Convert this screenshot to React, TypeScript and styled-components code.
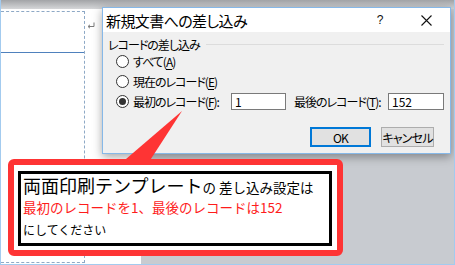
import React from "react";
import styled, { createGlobalStyle } from "styled-components";

const Global = createGlobalStyle`
  html, body { margin: 0; padding: 0; }
  body {
    width: 455px; height: 265px; overflow: hidden;
    font-family: "Noto Sans CJK JP", "Noto Sans", sans-serif;
  }
`;

const Frame = styled.div`
  position: relative;
  width: 455px;
  height: 265px;
  box-sizing: border-box;
  border: 1px solid #a3cbef;
  border-top: none;
  display: flex;
  flex-direction: column;
  background: #c8cbd0;
  overflow: hidden;
`;

const TopStrip = styled.div`
  height: 9px;
  flex: none;
  background: linear-gradient(#a2a4a7, #d5d6d8);
`;

const Workspace = styled.div`
  flex: 1;
  display: flex;
`;

const Page = styled.div`
  width: 140px;
  background: #fff;
  padding-top: 2px;
  box-sizing: border-box;
  display: flex;
  align-items: flex-start;
`;

const MarginBox = styled.div`
  width: 84px;
  height: 252px;
  box-sizing: border-box;
  border: 1px dashed #8ea9c6;
  border-left: none;
`;

const RuleLine = styled.div`
  margin-top: 40px;
  height: 1px;
  background: #4f81bd;
`;

const ReturnMark = styled.svg`
  margin: 11px 0 0 2px;
  flex: none;
`;

const Dialog = styled.div`
  position: absolute;
  left: 101px;
  top: 7px;
  width: 349px;
  height: 147px;
  box-sizing: border-box;
  border: 1px solid #86b8e8;
  background: #f0f0f0;
  box-shadow: 0 3px 9px rgba(0, 0, 0, 0.35);
  display: flex;
  flex-direction: column;
  font-feature-settings: "palt";
`;

const TitleBar = styled.div`
  height: 24px;
  background: #fff;
  display: flex;
  align-items: center;
  padding-left: 3px;
`;

const Title = styled.div`
  font-size: 15px;
  letter-spacing: -0.6px;
  color: #000;
  line-height: 1;
`;

const Help = styled.div`
  margin-left: auto;
  width: 10px;
  font-family: "Liberation Sans", sans-serif;
  font-size: 12px;
  color: #111;
  text-align: center;
`;

const CloseBtn = styled.svg`
  margin: 0 18px 0 36px;
`;

const Body = styled.div`
  flex: 1;
  display: flex;
  flex-direction: column;
  padding-top: 4px;
`;

const GroupHeader = styled.div`
  display: flex;
  align-items: center;
  height: 16px;
  padding: 0 5px;
  font-size: 12px;
  letter-spacing: -1px;
  color: #000;
`;

const GroupLine = styled.div`
  flex: 1;
  height: 1px;
  background: #dcdcdc;
  margin-left: 6px;
  margin-right: 1px;
`;

const RadioList = styled.div`
  display: flex;
  flex-direction: column;
  gap: 1px;
  padding-left: 13px;
`;

const Row = styled.div`
  display: flex;
  align-items: center;
  height: 19px;
`;

const Radio = styled.span<{ $checked?: boolean }>`
  width: 13px;
  height: 13px;
  box-sizing: border-box;
  border: 1px solid #333;
  border-radius: 50%;
  background: #fff;
  display: flex;
  align-items: center;
  justify-content: center;
  flex: none;
  &::after {
    content: "";
    width: 7px;
    height: 7px;
    border-radius: 50%;
    background: #333;
    display: ${(p) => (p.$checked ? "block" : "none")};
  }
`;

const Label = styled.span<{ $w?: number; $ml?: number }>`
  font-size: 12px;
  letter-spacing: -1px;
  color: #000;
  margin-left: ${(p) => p.$ml ?? 4}px;
  width: ${(p) => (p.$w ? `${p.$w}px` : "auto")};
  flex: none;
  white-space: nowrap;
  u { text-decoration: underline; text-underline-offset: 2px; }
`;

const Field = styled.div<{ $w: number }>`
  width: ${(p) => p.$w}px;
  height: 17px;
  box-sizing: border-box;
  border: 1px solid #7a7a7a;
  background: #fff;
  font-size: 12px;
  padding-left: 3px;
  display: flex;
  align-items: center;
  flex: none;
`;

const Buttons = styled.div`
  display: flex;
  justify-content: flex-end;
  gap: 10px;
  padding-right: 16px;
  margin-top: 16px;
`;

const Button = styled.div<{ $default?: boolean; $w: number }>`
  width: ${(p) => p.$w}px;
  height: 20px;
  box-sizing: border-box;
  background: #e1e1e1;
  border: ${(p) => (p.$default ? "2px solid #0078d7" : "1px solid #adadad")};
  display: flex;
  align-items: center;
  justify-content: center;
  font-size: 12px;
  letter-spacing: -0.8px;
  white-space: nowrap;
  color: #000;
`;

const Tail = styled.svg`
  position: absolute;
  left: 110px;
  top: 105px;
`;

const Callout = styled.div`
  position: absolute;
  left: 7px;
  top: 159px;
  width: 335px;
  height: 97px;
  box-sizing: border-box;
  border: 6px solid #fe3434;
  border-radius: 6px;
  background: #fff;
  padding: 6px 5px 4px 4px;
`;

const NoteBox = styled.div`
  height: 100%;
  box-sizing: border-box;
  border: 3px solid #000;
  padding-left: 2px;
  display: flex;
  flex-direction: column;
`;

const NoteLine = styled.div<{ $h: number; $size: number; $color?: string }>`
  height: ${(p) => p.$h}px;
  line-height: ${(p) => p.$h}px;
  font-size: ${(p) => p.$size}px;
  color: ${(p) => p.$color ?? "#000"};
  white-space: nowrap;
`;

const Big = styled.span`
  font-size: 18px;
`;

export default function App() {
  return (
    <>
      <Global />
      <Frame>
        <TopStrip />
        <Workspace>
          <Page>
            <MarginBox>
              <RuleLine />
            </MarginBox>
            <ReturnMark width="8" height="7" viewBox="0 0 8 7">
              <path d="M7 0.5 V4.5 H1.5" fill="none" stroke="#7a7a7a" strokeWidth="1" />
              <path d="M3 2.8 L1 4.5 L3 6.2" fill="none" stroke="#7a7a7a" strokeWidth="1" />
            </ReturnMark>
          </Page>
        </Workspace>

        <Dialog>
          <TitleBar>
            <Title>新規文書への差し込み</Title>
            <Help>?</Help>
            <CloseBtn width="11" height="11" viewBox="0 0 11 11">
              <path d="M0.5 0.5 L10.5 10.5 M10.5 0.5 L0.5 10.5" stroke="#111" strokeWidth="1.1" />
            </CloseBtn>
          </TitleBar>
          <Body>
            <GroupHeader>
              レコードの差し込み
              <GroupLine />
            </GroupHeader>
            <RadioList>
              <Row>
                <Radio />
                <Label>すべて(<u>A</u>)</Label>
              </Row>
              <Row>
                <Radio />
                <Label>現在のレコード(<u>E</u>)</Label>
              </Row>
              <Row>
                <Radio $checked />
                <Label $w={98}>最初のレコード(<u>F</u>):</Label>
                <Field $w={55}>1</Field>
                <Label $w={94} $ml={8}>最後のレコード(<u>T</u>):</Label>
                <Field $w={56}>152</Field>
              </Row>
            </RadioList>
            <Buttons>
              <Button $default $w={61}>OK</Button>
              <Button $w={53}>キャンセル</Button>
            </Buttons>
          </Body>
        </Dialog>

        <Tail width="80" height="62" viewBox="0 0 80 62">
          <polygon points="8,60 36,60 71,6" fill="#fe3434" />
        </Tail>

        <Callout>
          <NoteBox>
            <NoteLine $h={23} $size={13.5}>
              <Big>両面印刷テンプレート</Big>の 差し込み設定は
            </NoteLine>
            <NoteLine $h={21} $size={13.5} $color="#fe1c1c">
              最初のレコードを1、最後のレコードは152
            </NoteLine>
            <NoteLine $h={24} $size={12}>
              にしてください
            </NoteLine>
          </NoteBox>
        </Callout>
      </Frame>
    </>
  );
}
